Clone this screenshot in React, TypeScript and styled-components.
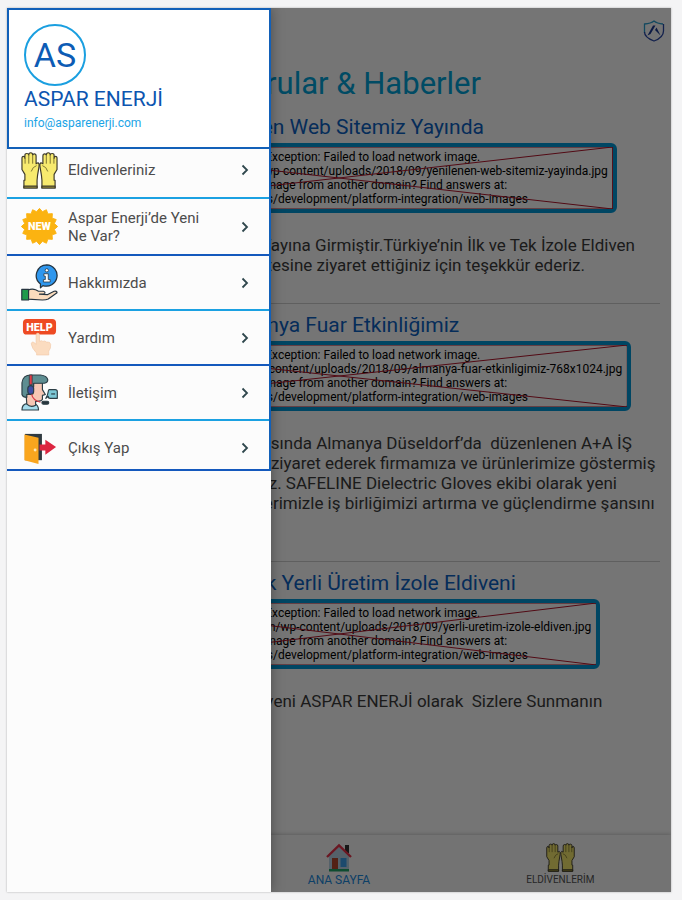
import React from "react";
import styled, { createGlobalStyle } from "styled-components";

const GlobalStyle = createGlobalStyle`
  * { box-sizing: border-box; }
  body { margin: 0; background: #f4f4f5; font-family: Roboto, "Noto Sans", sans-serif; }
  h1, h2, p, ul { margin: 0; padding: 0; }
  button { font: inherit; color: inherit; background: none; border: 0; padding: 0; text-align: left; }
`;

const Page = styled.div`
  min-height: 100vh;
  display: flex;
  padding: 8px 11px 8px 7px;
`;

const Device = styled.div`
  position: relative;
  flex: 1;
  min-width: 0;
  display: flex;
  flex-direction: column;
  background: #fff;
  overflow: hidden;
  box-shadow: 0 0 2px rgba(0, 0, 0, 0.3);
`;

const TopBar = styled.header`
  display: flex;
  justify-content: flex-end;
  padding: 12px 6px;
  height: 48px;
`;

const Feed = styled.main`
  flex: 1;
  padding: 8px 11px 0;
`;

const FeedTitle = styled.h1`
  font-size: 31px;
  line-height: 40px;
  font-weight: 400;
  text-align: center;
  color: #00a3d9;
  margin-bottom: 8px;
`;

const Article = styled.article`
  & + & {
    border-top: 1px solid #cfcfcf;
    margin-top: 28px;
    padding-top: 6px;
  }
`;

const ArticleTitle = styled.h2`
  font-size: 21px;
  line-height: 30px;
  font-weight: 400;
  text-align: center;
  color: #0d62c4;
  margin-bottom: 1px;
`;

const BrokenImage = styled.div`
  position: relative;
  width: fit-content;
  margin: 0 auto 22px;
  padding: 3px 5px;
  border: 4px solid #0098d8;
  border-radius: 6px;
  font-size: 12px;
  line-height: 14px;
  text-align: center;
  white-space: pre;
  color: #000;
`;

const Cross = styled.svg`
  position: absolute;
  inset: 0;
  width: 100%;
  height: 100%;
`;

const Body = styled.p`
  font-size: 17px;
  line-height: 20px;
  color: #3c3c3c;
  white-space: pre;
`;

const BottomNav = styled.nav`
  display: grid;
  grid-template-columns: repeat(3, 1fr);
  height: 57px;
  background: #fafafa;
  box-shadow: 0 -1px 4px rgba(0, 0, 0, 0.2);
`;

const Tab = styled.button<{ $column: number; $active?: boolean }>`
  grid-column: ${(p) => p.$column};
  display: flex;
  flex-direction: column;
  align-items: center;
  padding-top: 8px;
  font-size: ${(p) => (p.$active ? 12 : 10)}px;
  line-height: 16px;
  color: ${(p) => (p.$active ? "#1d8be0" : "#555")};
`;

const Scrim = styled.div`
  position: absolute;
  inset: 0;
  background: rgba(0, 0, 0, 0.54);
`;

const Drawer = styled.aside`
  position: absolute;
  top: 0;
  bottom: 0;
  left: 0;
  width: 264px;
  background: #fcfcfc;
  box-shadow: 0 0 12px rgba(0, 0, 0, 0.35);
`;

const Account = styled.div`
  height: 141px;
  border: 2px solid #1260b8;
  background: #fff;
  padding: 14px 15px;
`;

const Avatar = styled.div`
  width: 62px;
  height: 62px;
  border: 2px solid #1a9fe0;
  border-radius: 50%;
  display: flex;
  align-items: center;
  justify-content: center;
  font-size: 34px;
  line-height: 40px;
  color: #0d5cb5;
`;

const AccountName = styled.div`
  font-size: 21px;
  line-height: 27px;
  color: #0d55b0;
`;

const AccountMail = styled.div`
  font-size: 12px;
  line-height: 20px;
  color: #1ba4e6;
`;

const Menu = styled.ul`
  list-style: none;
  border-right: 2px solid #1260b8;
`;

const MenuEntry = styled.li<{ $height: number; $dark?: boolean }>`
  height: ${(p) => p.$height}px;
  border-bottom: 2px solid ${(p) => (p.$dark ? "#1459bd" : "#1ba1e2")};
`;

const MenuButton = styled.button<{ $top?: number; $bottom?: number }>`
  width: 100%;
  height: 100%;
  display: flex;
  align-items: center;
  gap: 10px;
  padding: ${(p) => p.$top ?? 0}px 20px ${(p) => p.$bottom ?? 0}px 14px;
  font-size: 15px;
  line-height: 18px;
  color: #4c4c4c;
`;

const MenuLabel = styled.span`
  flex: 1;
  padding-right: 24px;
`;

const Gloves = ({ size }: { size: number }) => (
  <svg width={size} height={size} viewBox="0 0 38 38" stroke="#3d3a2c" strokeWidth="1.2" strokeLinejoin="round">
    {[false, true].map((flip) => (
      <g key={String(flip)} transform={flip ? "translate(38 0) scale(-1 1)" : undefined}>
        <path
          d="M4 29 L4 23 L1 18 V6.500 Q1 4.500 2.500 4.500 Q4 4.500 4 6.500 V3.500 Q4 1.500 6 1.500 Q8 1.500 8 3 Q8 .8 10 .8 Q12 .8 12 3 Q12 2 13.500 2 Q15.500 2 15.500 4 V12 L17.500 11 Q19.200 12 18.500 15 L17 24 L16.500 29 V37 H3 V29 Z"
          fill="#f7ea6e"
        />
        <path d="M4.200 6 V12 M8 3 V12 M12 3 V12 M10.500 20 Q12 15 16 14" fill="none" strokeWidth="1" stroke="#7d7430" />
        <path d="M3 35 H16.500 V37 H3 Z" fill="#b3a43c" />
      </g>
    ))}
  </svg>
);

const points = Array.from({ length: 32 }, (_, i) => {
  const r = i % 2 ? 15.5 : 18.6;
  const a = (i * Math.PI) / 16 - Math.PI / 2;
  return `${(19 + r * Math.cos(a)).toFixed(1)},${(19 + r * Math.sin(a)).toFixed(1)}`;
}).join(" ");

const NewBadge = () => (
  <svg width="37" height="37" viewBox="0 0 38 38">
    <polygon points={points} fill="#fbb311" stroke="#fbb311" strokeWidth="1" strokeLinejoin="round" />
    <text x="19" y="23" textAnchor="middle" fontFamily="Roboto" fontWeight="900" fontSize="11" fill="#fff">NEW</text>
  </svg>
);

const InfoHand = () => (
  <svg width="37" height="37" viewBox="0 0 38 38" stroke="#26343f" strokeLinejoin="round">
    <path d="M26.500 .8 a11 11 0 1 1 -4 21.400 L20 24.500 V20.500 A11 11 0 0 1 26.500 .8 Z" fill="#2f97ee" strokeWidth="1.300" />
    <circle cx="26.500" cy="6.500" r="1.700" fill="#fff" strokeWidth=".8" />
    <path d="M23.500 10 H28 V16 H30 V18.500 H23 V16 H25 V12.500 H23.500 Z" fill="#fff" strokeWidth=".8" />
    <path d="M7 27 Q11 25 15 26.500 L18 28 H23 Q25 28.500 24.500 30 Q24 31 21 31 H19 L27 31.500 L34 28 Q37 27.500 37 29.500 L28 36 Q26 37 22 37 L7 36 Z" fill="#fbdcbd" strokeWidth="1.200" />
    <rect x=".8" y="26" width="7" height="11" fill="#1f9a4b" strokeWidth="1.200" />
  </svg>
);

const HelpHand = () => (
  <svg width="37" height="37" viewBox="0 0 38 38">
    <rect x="2" y="0" width="34" height="16" rx="4" fill="#ee4a23" />
    <text x="19" y="12" textAnchor="middle" fontFamily="Roboto" fontWeight="900" fontSize="11" fill="#fff">HELP</text>
    <path
      d="M15.500 17 Q15.500 14.500 17.300 14.500 Q19 14.500 19 17 V23 Q21 21.500 22.500 23 Q24.500 21.800 26 23.600 Q30 23 30.500 26 Q31 30 28.500 33 V37 H16 V35 Q11 30 10.500 25.500 Q11 22.500 14 24.500 L15.500 26 Z"
      fill="#fbdcc0"
      stroke="#f1c7a3"
      strokeWidth=".6"
    />
  </svg>
);

const Support = () => (
  <svg width="37" height="37" viewBox="0 0 38 38" stroke="#2c3e46" strokeWidth="1.200" strokeLinejoin="round">
    <path d="M1 37 Q1 31 6 30.500 H14 Q18 32 18 37 Z" fill="#a6dcec" />
    <path d="M5 18 H12 L13 9 H22 V16 L25 21 L22 22 V26 Q21 28.500 15 28 V32 Q10 35 6 31 Z" fill="#f6c6b4" />
    <path d="M1 21 V9 Q2 1 10 1 H20 Q27 2 27.500 6 Q27.500 9 24 9.500 H13 V13 L10 21 H6 V24 Q2 24 1 21 Z" fill="#5e8e92" />
    <path d="M8.500 1 H11.500 V11 H8.500 Z" fill="#e23b46" strokeWidth=".8" />
    <rect x="7" y="12" width="6" height="9" rx="3" fill="#3e4ea6" />
    <path d="M11 21 Q12 27 20 29" fill="none" stroke="#d93d4a" />
    <rect x="21.500" y="28" width="7" height="3" rx="1.500" fill="#26343b" />
    <path d="M29 16 H35 Q37.300 16 37.300 18 V25 H30 Q28 25 28 23 L25.500 25 Q27.500 22 28 18 Q28 16 29 16 Z" fill="#7cc8d6" />
    <path d="M31 20.500 H35" />
  </svg>
);

const ExitDoor = () => (
  <svg width="37" height="37" viewBox="0 0 38 38">
    <path d="M4 4 H21.500 V31 H4 Z" fill="#303a40" />
    <path d="M19 15 H25 V10 L36 17.500 L25 25.500 V21 H19 Z" fill="#dc2540" />
    <path d="M3.500 4.500 L18 8 V35 L3.500 31 Z" fill="#faa61e" />
    <circle cx="14.500" cy="20.500" r="1.500" fill="#ffe9b5" />
  </svg>
);

const Chevron = () => (
  <svg width="8" height="12" viewBox="0 0 8 12" fill="none" stroke="#2f474d" strokeWidth="1.800">
    <path d="M1.500 1.500 L6 6 L1.500 10.500" />
  </svg>
);

const Shield = () => (
  <svg width="22" height="22" viewBox="0 0 22 22" fill="none">
    <path d="M1.500 13 V4 Q8 3.500 11 1 Q14 3.500 20 4" stroke="#2a9fd0" strokeWidth="1.300" />
    <path d="M20.500 4 V11 Q20.500 17.500 11 21 Q1.500 17.500 1.500 12" stroke="#2b49a8" strokeWidth="1.300" />
    <path d="M4.500 15.500 L10 5.500 H12.500 L7.500 14 Z" fill="#1b3a94" />
    <path d="M12 10 L13.500 7.500 L17.500 15.500 Z" fill="#1b3a94" />
  </svg>
);

const House = () => (
  <svg width="28" height="29" viewBox="0 0 28 29">
    <rect x="20" y="2" width="4" height="8" fill="#333" />
    <path d="M4 13 L14 4 L24 13 V27 H4 Z" fill="#b9d4e8" />
    <path d="M2 14 L14 2.500 L26 14" fill="none" stroke="#e8324a" strokeWidth="2.400" />
    <rect x="7" y="15" width="6" height="12" fill="#b5482e" />
    <rect x="15.500" y="15" width="6" height="9" fill="#3ea2ee" />
    <rect x="4" y="26" width="20" height="2.500" fill="#1fa56a" />
  </svg>
);

const failure = (path: string) =>
  [
    "ImageCodecException: Failed to load network image.",
    `Image URL: https://asparenerji.com/wp-content/uploads/2018/09/${path}`,
    "Trying to load an image from another domain? Find answers at:",
    "https://flutter.dev/docs/development/platform-integration/web-images",
  ].join("\n");

const articles = [
  {
    title: "Yenilenen Web Sitemiz Yayında",
    image: "yenilenen-web-sitemiz-yayinda.jpg",
    body: "Yenilenen Web Sitemiz, Yeniden Yayına Girmiştir.Türkiye’nin İlk ve Tek İzole Eldiven\nÜreticisi SAFELINE’nın İnternet Sitesine ziyaret ettiğiniz için teşekkür ederiz.",
  },
  {
    title: "Almanya Fuar Etkinliğimiz",
    image: "almanya-fuar-etkinligimiz-768x1024.jpg",
    body: "17 - 20 Ekim 2017 tarihlerinde arasında Almanya Düseldorf’da  düzenlenen A+A İŞ\nGüvenliği Fuarı’nda da standımızı ziyaret ederek firmamıza ve ürünlerimize göstermiş\nolduğunuz ilgi için  teşekkür ederiz. SAFELINE Dielectric Gloves ekibi olarak yeni\nve mevcut bütün değerli müşterilerimizle iş birliğimizi artırma ve güçlendirme şansını\nyakaladık.",
  },
  {
    title: "Bölgede Tek Yerli Üretim İzole Eldiveni",
    image: "yerli-uretim-izole-eldiven.jpg",
    body: "Türkiye’nin İlk ve Teknik İzole Eldiveni ASPAR ENERJİ olarak  Sizlere Sunmanın\nGururunu yaşıyoruz.",
  },
];

const menu = [
  { label: "Eldivenleriniz", icon: <Gloves size={37} />, height: 50, bottom: 6 },
  { label: "Aspar Enerji’de Yeni Ne Var?", icon: <NewBadge />, height: 57, dark: true },
  { label: "Hakkımızda", icon: <InfoHand />, height: 55 },
  { label: "Yardım", icon: <HelpHand />, height: 55, dark: true },
  { label: "İletişim", icon: <Support />, height: 55 },
  { label: "Çıkış Yap", icon: <ExitDoor />, height: 50, top: 6, dark: true },
];

export default function App() {
  return (
    <Page>
      <GlobalStyle />
      <Device>
        <TopBar>
          <Shield />
        </TopBar>
        <Feed>
          <FeedTitle>Duyurular &amp; Haberler</FeedTitle>
          {articles.map((a) => (
            <Article key={a.image}>
              <ArticleTitle>{a.title}</ArticleTitle>
              <BrokenImage>
                {failure(a.image)}
                <Cross viewBox="0 0 100 100" preserveAspectRatio="none" fill="none" stroke="#b3162c">
                  <path d="M0 0 H100 V100 H0 Z M0 0 L100 100 M100 0 L0 100" vectorEffect="non-scaling-stroke" />
                </Cross>
              </BrokenImage>
              <Body>{a.body}</Body>
            </Article>
          ))}
        </Feed>
        <BottomNav>
          <Tab $column={2} $active>
            <House />
            ANA SAYFA
          </Tab>
          <Tab $column={3}>
            <Gloves size={29} />
            ELDİVENLERİM
          </Tab>
        </BottomNav>
        <Scrim />
        <Drawer>
          <Account>
            <Avatar>AS</Avatar>
            <AccountName>ASPAR ENERJİ</AccountName>
            <AccountMail>info@asparenerji.com</AccountMail>
          </Account>
          <Menu>
            {menu.map((m) => (
              <MenuEntry key={m.label} $height={m.height} $dark={m.dark}>
                <MenuButton $top={m.top} $bottom={m.bottom}>
                  {m.icon}
                  <MenuLabel>{m.label}</MenuLabel>
                  <Chevron />
                </MenuButton>
              </MenuEntry>
            ))}
          </Menu>
        </Drawer>
      </Device>
    </Page>
  );
}
